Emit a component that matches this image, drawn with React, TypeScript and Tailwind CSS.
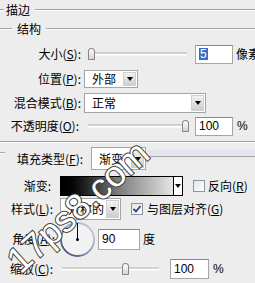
import React from "react";

const U = ({ c }: { c: string }) => <span className="underline underline-offset-[1px]">{c}</span>;

function Tri() {
  return <div className="w-0 h-0 border-l-[3.5px] border-r-[3.5px] border-t-[4px] border-l-transparent border-r-transparent border-t-black" />;
}

function Dropdown({ text, w, h }: { text: string; w: string; h: string }) {
  return (
    <div className={`flex items-stretch bg-white border border-[#a5a5a5] ${w} ${h} shrink-0`}>
      <div className="flex-1 flex items-center pl-[7px] text-[12px] leading-none overflow-hidden whitespace-nowrap">{text}</div>
      <div className="w-[13px] m-[1px] flex items-center justify-center bg-gradient-to-b from-[#f2f2f2] to-[#cfcfcf] border border-[#d0d0d0]">
        <Tri />
      </div>
    </div>
  );
}

function Slider({ w, pos }: { w: string; pos: number }) {
  return (
    <div className={`relative h-full shrink-0 ${w}`}>
      <div className="absolute left-0 right-[2px] top-1/2 -translate-y-1/2 h-[3px] border-t border-[#a9a9a9] bg-white" />
      <div
        className="absolute top-1/2 -translate-y-1/2 w-[7px] h-[12px] rounded-t-[4px] rounded-b-[1px] border border-[#868686] bg-gradient-to-b from-white to-[#d4d4d4]"
        style={{ left: pos }}
      />
    </div>
  );
}

function Input({ children, w, h }: { children: React.ReactNode; w: string; h: string }) {
  return (
    <div className={`flex items-center bg-white border border-[#a5a5a5] border-t-[#8c8c8c] ${w} ${h} shrink-0 pl-[3px] font-['Liberation_Sans'] text-[12px] leading-none`}>
      {children}
    </div>
  );
}

function Check({ checked }: { checked?: boolean }) {
  return (
    <div className="w-[12px] h-[12px] shrink-0 border border-[#8a96a6] bg-gradient-to-br from-[#e4e4e4] to-white flex items-center justify-center">
      {checked && (
        <svg width="10" height="10" viewBox="0 0 10 10">
          <path d="M1.5 5 L4 7.5 L8.5 2" stroke="#2a4a78" strokeWidth="1.8" fill="none" />
        </svg>
      )}
    </div>
  );
}

const Line = ({ cls }: { cls: string }) => <div className={`h-px bg-[#a3a3a3] shadow-[0_1px_0_#ffffff] ${cls}`} />;

export default function App() {
  return (
    <div className="relative w-[255px] h-[283px] overflow-hidden bg-[#ededed] text-black font-['Noto_Sans_CJK_SC',sans-serif] text-[12px] leading-none">
      {/* 描边 */}
      <div className="flex items-center h-[19px]">
        <Line cls="w-[4px]" />
        <span className="ml-[2px]">描边</span>
        <Line cls="flex-1 ml-[5px]" />
      </div>
      {/* 结构 */}
      <div className="flex items-center h-[19px]">
        <Line cls="w-[12px]" />
        <span className="ml-[5px]">结构</span>
        <Line cls="flex-1 ml-[5px]" />
      </div>

      {/* 大小 */}
      <div className="flex items-center h-[20px] mt-[6px]">
        <div className="w-[81px] shrink-0 text-right">大小(<U c="S" />):</div>
        <div className="ml-[7px] h-full flex"><Slider w="w-[101px]" pos={0} /></div>
        <div className="ml-[6px]">
          <Input w="w-[38px]" h="h-[19px]">
            <span className="bg-[#3a6cc4] text-white px-px">5</span>
          </Input>
        </div>
        <span className="ml-[3px] whitespace-nowrap">像素</span>
      </div>

      {/* 位置 */}
      <div className="flex items-center h-[20px] mt-[5px]">
        <div className="w-[81px] shrink-0 text-right">位置(<U c="P" />):</div>
        <div className="ml-[3px]"><Dropdown text="外部" w="w-[54px]" h="h-[18px]" /></div>
      </div>

      {/* 混合模式 */}
      <div className="flex items-center h-[20px] mt-[4px]">
        <div className="w-[81px] shrink-0 text-right">混合模式(<U c="B" />):</div>
        <div className="ml-[3px]"><Dropdown text="正常" w="w-[122px]" h="h-[20px]" /></div>
      </div>

      {/* 不透明度 */}
      <div className="flex items-center h-[20px] mt-[3px]">
        <div className="w-[79px] shrink-0 text-right">不透明度(<U c="O" />):</div>
        <div className="ml-[9px] h-full flex"><Slider w="w-[101px]" pos={94} /></div>
        <div className="ml-[6px]">
          <Input w="w-[38px]" h="h-[19px]">100</Input>
        </div>
        <span className="ml-[4px] font-['Liberation_Sans']">%</span>
      </div>

      {/* separator */}
      <Line cls="mt-[5px] w-full" />

      {/* 填充类型 */}
      <div className="flex items-center h-[23px] mt-[5px]">
        <Line cls="w-[5px] self-start mt-[5px]" />
        <span className="ml-[12px] whitespace-nowrap">填充类型(<U c="F" />):</span>
        <div className="ml-[8px]"><Dropdown text="渐变" w="w-[55px]" h="h-[23px]" /></div>
        <div className="flex-1 self-start mt-[3px] h-[7px] bg-[#e5e5ef] border-b border-[#a3a3a3]" />
      </div>

      {/* 渐变 */}
      <div className="flex items-center h-[20px] mt-[6px]">
        <div className="w-[51px] shrink-0 text-right">渐变:</div>
        <div className="ml-[9px] w-[123px] h-[20px] shrink-0 flex border border-black">
          <div className="flex-1 bg-gradient-to-r from-black via-[#7a7a7a] to-[#e6e6e6]" />
          <div className="w-[9px] border-l border-black bg-white flex items-center justify-center">
            <Tri />
          </div>
        </div>
        <div className="ml-[10px]"><Check /></div>
        <span className="ml-[3px] whitespace-nowrap">反向(<U c="R" />)</span>
      </div>

      {/* 样式 */}
      <div className="flex items-center h-[22px] mt-[2px]">
        <div className="w-[53px] shrink-0 text-right">样式(<U c="L" />):</div>
        <div className="ml-[7px]"><Dropdown text="对称的" w="w-[61px]" h="h-[22px]" /></div>
        <div className="ml-[10px]"><Check checked /></div>
        <span className="ml-[4px] whitespace-nowrap">与图层对齐(<U c="G" />)</span>
      </div>

      {/* 角度 */}
      <div className="flex items-center h-[36px] mt-[1px]">
        <div className="w-[55px] shrink-0 text-right">角度(<U c="A" />):</div>
        <svg className="ml-[4px] shrink-0" width="37" height="37" viewBox="0 0 37 37">
          <defs>
            <linearGradient id="ring" x1="1" y1="0" x2="0" y2="1">
              <stop offset="0" stopColor="#d4d8e6" />
              <stop offset="0.5" stopColor="#8c96b8" />
              <stop offset="1" stopColor="#2e3a6c" />
            </linearGradient>
          </defs>
          <circle cx="18.5" cy="18.5" r="16.5" fill="#f3f3f3" stroke="url(#ring)" strokeWidth="1.8" />
          <line x1="18.5" y1="18.5" x2="18.5" y2="2" stroke="#000" strokeWidth="1" />
          <circle cx="18.5" cy="18.5" r="1.5" fill="#000" />
        </svg>
        <div className="ml-[2px]">
          <Input w="w-[42px]" h="h-[21px]">90</Input>
        </div>
        <span className="ml-[3px]">度</span>
      </div>

      {/* 缩放 */}
      <div className="flex items-center h-[20px] mt-[2px]">
        <div className="w-[53px] shrink-0 text-right">缩放(<U c="C" />):</div>
        <div className="ml-[9px] h-full flex"><Slider w="w-[99px]" pos={60} /></div>
        <div className="ml-[9px]">
          <Input w="w-[39px]" h="h-[20px]">100</Input>
        </div>
        <span className="ml-[4px] font-['Liberation_Sans']">%</span>
      </div>

      {/* watermark */}
      <div className="absolute left-[-14px] top-[186px] w-[184px] h-[42px] flex items-center justify-center rotate-[-42deg] pointer-events-none">
        <span className="font-['Liberation_Sans'] text-[36px] leading-none text-white [-webkit-text-stroke:2px_#3c3c3c] [paint-order:stroke_fill] whitespace-nowrap">
          17ps8.com
        </span>
      </div>
    </div>
  );
}
